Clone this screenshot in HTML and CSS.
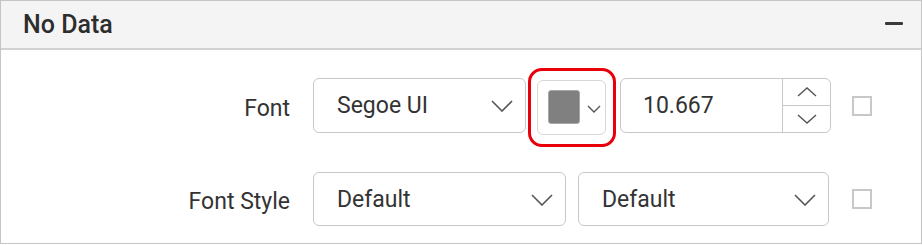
FILE: index.html
```html
<!DOCTYPE html>
<html lang="en">
<head>
    <meta charset="UTF-8">
    <meta name="viewport" content="width=device-width, initial-scale=1.0">
    <title>No Data</title>
    <link rel="stylesheet" href="styles.css">
</head>
<body>
    <div class="panel">
        <div class="panel-header">
            <span class="panel-title">No Data</span>
            <span class="collapse"></span>
        </div>
        <div class="panel-body">
            <div class="row row-font">
                <span class="label">Font</span>
                <div class="select select-font">
                    <span>Segoe UI</span>
                    <svg class="chevron" width="22" height="12" viewBox="0 0 22 12"><path d="M1 1 L11 11 L21 1" fill="none" stroke="#555" stroke-width="1.6"/></svg>
                </div>
                <div class="color-wrap">
                    <div class="color-picker">
                        <span class="swatch"></span>
                        <svg class="chevron-small" width="14" height="8" viewBox="0 0 14 8"><path d="M1 1 L7 7 L13 1" fill="none" stroke="#555" stroke-width="1.4"/></svg>
                    </div>
                </div>
                <div class="numeric">
                    <span class="numeric-value">10.667</span>
                    <div class="spin">
                        <span class="spin-btn"><svg width="20" height="10" viewBox="0 0 20 10"><path d="M1 9 L10 1 L19 9" fill="none" stroke="#555" stroke-width="1.4"/></svg></span>
                        <span class="spin-btn"><svg width="20" height="10" viewBox="0 0 20 10"><path d="M1 1 L10 9 L19 1" fill="none" stroke="#555" stroke-width="1.4"/></svg></span>
                    </div>
                </div>
                <span class="checkbox"></span>
            </div>
            <div class="row row-style">
                <span class="label">Font Style</span>
                <div class="select select-style">
                    <span>Default</span>
                    <svg class="chevron" width="22" height="12" viewBox="0 0 22 12"><path d="M1 1 L11 11 L21 1" fill="none" stroke="#555" stroke-width="1.6"/></svg>
                </div>
                <div class="select select-weight">
                    <span>Default</span>
                    <svg class="chevron" width="22" height="12" viewBox="0 0 22 12"><path d="M1 1 L11 11 L21 1" fill="none" stroke="#555" stroke-width="1.6"/></svg>
                </div>
                <span class="checkbox"></span>
            </div>
        </div>
    </div>
</body>
</html>
```

FILE: styles.css
```css
body {
    margin: 0;
    padding: 0;
    font-family: Roboto, "Liberation Sans", sans-serif;
    color: #333;
    background: #fff;
}

.panel {
    width: 920px;
    height: 242px;
    border: 1px solid #c4c4c4;
    overflow: hidden;
}

.panel-header {
    height: 47px;
    background: #f4f4f4;
    border-bottom: 2px solid #d2d2d2;
    display: flex;
    align-items: center;
    justify-content: space-between;
    padding: 0 18px 0 22px;
}

.panel-title {
    font-size: 25px;
    font-weight: 500;
    color: #2d2d2d;
}

.collapse {
    width: 18px;
    height: 3px;
    background: #3a3a3a;
    border-radius: 1px;
    margin-top: -2px;
}

.panel-body {
    display: flex;
    flex-direction: column;
}

.row {
    display: flex;
    align-items: center;
    font-size: 23px;
    height: 55px;
}

.row-font {
    margin-top: 28px;
}

.row-style {
    margin-top: 39px;
    height: 54px;
}

.label {
    width: 289px;
    text-align: right;
    margin-right: 23px;
    padding-top: 5px;
}

.select {
    box-sizing: border-box;
    height: 55px;
    border: 1px solid #c8c8c8;
    border-radius: 6px;
    display: flex;
    align-items: center;
    justify-content: space-between;
    padding: 0 12px 0 23px;
}

.select-font {
    width: 213px;
}

.row-style .select {
    height: 54px;
}

.select-style {
    width: 253px;
    margin-right: 12px;
}

.select-weight {
    width: 251px;
}

.chevron {
    margin-top: 1px;
}

/* red highlight ring around the colour picker */
.color-wrap {
    margin: -9px 4px -12px 2px;
    padding: 9px 7px 9px 6px;
    border: 3px solid #e8000b;
    border-radius: 14px;
    display: flex;
}

.color-picker {
    box-sizing: border-box;
    width: 69px;
    height: 55px;
    border: 1px solid #d8d8d8;
    border-radius: 6px;
    display: flex;
    align-items: center;
    padding-left: 10px;
}

.swatch {
    width: 30px;
    height: 32px;
    background: #808080;
    border: 1px solid #a8a8a8;
    border-radius: 3px;
    margin-right: 7px;
}

.chevron-small {
    margin-top: 4px;
}

.numeric {
    box-sizing: border-box;
    width: 211px;
    height: 55px;
    border: 1px solid #c8c8c8;
    border-radius: 6px;
    display: flex;
    align-items: center;
    margin-right: 21px;
}

.numeric-value {
    flex: 1;
    padding-left: 22px;
}

.spin {
    width: 47px;
    height: 100%;
    border-left: 1px solid #c8c8c8;
    display: flex;
    flex-direction: column;
}

.spin-btn {
    flex: 1;
    display: flex;
    align-items: center;
    justify-content: center;
}

.spin-btn + .spin-btn {
    border-top: 1px solid #c8c8c8;
}

.checkbox {
    box-sizing: border-box;
    width: 20px;
    height: 20px;
    border: 2px solid #c8c8c8;
}

.row-style .checkbox {
    margin-left: 23px;
}
```
